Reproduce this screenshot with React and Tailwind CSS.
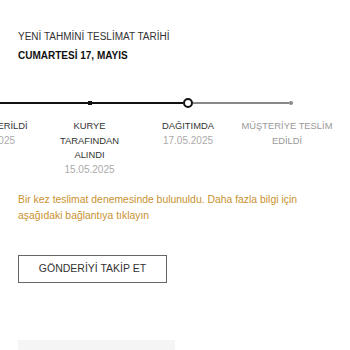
export default function App() {
  const steps = [
    { lines: ['SİPARİŞ VERİLDİ'], date: '14.05.2025', w: 'w-[100px]' },
    { lines: ['KURYE', 'TARAFINDAN', 'ALINDI'], date: '15.05.2025', w: 'w-[99px]' },
    { lines: ['DAĞITIMDA'], date: '17.05.2025', w: 'w-[98px]' },
    { lines: ['MÜŞTERİYE TESLİM', 'EDİLDİ'], date: '', w: 'w-[108px]' },
  ];

  return (
    <div className="w-[350px] h-[350px] overflow-hidden bg-white font-['Liberation_Sans',Arial,sans-serif]">
      <div className="px-[18px] pt-[31px]">
        <p className="text-[10px] leading-[12px] text-[#333]">YENİ TAHMİNİ TESLİMAT TARİHİ</p>
        <p className="mt-[7px] text-[10px] leading-[12px] font-bold text-[#111]">CUMARTESİ 17, MAYIS</p>
      </div>

      {/* timeline */}
      <div className="mt-[36px] overflow-hidden">
        <div className="flex ml-[-60px]">
          {steps.map((s, i) => (
            <div key={i} className={`${s.w} shrink-0 flex flex-col items-center`}>
              <div className="w-full h-[10px] flex items-center">
                <div className={`flex-1 ${i === 3 ? 'h-[1.5px] bg-[#888]' : 'h-[2px] bg-[#111]'}`} />
                {i === 2 ? (
                  <div className="w-[10px] h-[10px] rounded-full border-2 border-[#111] bg-white shrink-0" />
                ) : i === 3 ? (
                  <div className="w-[4px] h-[4px] rounded-full bg-[#888] shrink-0" />
                ) : (
                  <div className="w-[4px] h-[4px] bg-[#111] shrink-0" />
                )}
                <div className={`flex-1 ${i === 3 ? 'h-[1.5px] bg-transparent' : i === 2 ? 'h-[1.5px] bg-[#888]' : 'h-[2px] bg-[#111]'}`} />
              </div>
              <div className={`mt-[11px] text-center leading-[14.5px] ${i === 3 ? 'pr-[8px]' : ''}`}>
                {s.lines.map((l, j) => (
                  <p key={j} className={`text-[9.4px] ${i === 3 ? 'text-[#999]' : 'text-[#333]'}`}>{l}</p>
                ))}
                {s.date && <p className="text-[10px] text-[#aaa]">{s.date}</p>}
              </div>
            </div>
          ))}
        </div>
      </div>

      <div className="px-[18px] mt-[15px]">
        <p className="text-[10.4px] leading-[16px] text-[#c8922f]">
          Bir kez teslimat denemesinde bulunuldu. Daha fazla bilgi için aşağıdaki bağlantıya tıklayın
        </p>
        <button className="mt-[31px] w-[149px] h-[28px] border border-[#666] text-[10.5px] text-[#333]">
          GÖNDERİYİ TAKİP ET
        </button>
        <div className="mt-[57px] w-[157px] h-[10px] bg-[#f5f5f5]" />
      </div>
    </div>
  );
}
